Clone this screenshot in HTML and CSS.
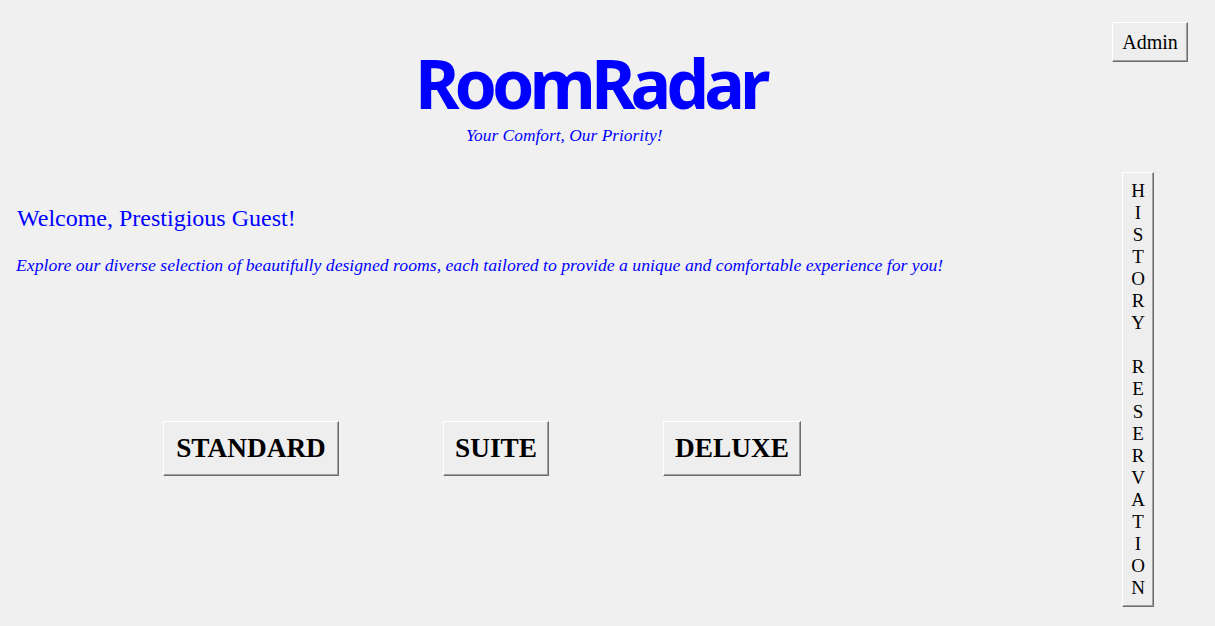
FILE: index.html
```html
<!DOCTYPE html>
<html>
<head>
<meta charset="utf-8">
<link rel="stylesheet" href="styles.css">
</head>
<body>
<div class="page">
  <main class="main">
    <header class="header">
      <h1 class="title">RoomRadar</h1>
      <p class="tagline">Your Comfort, Our Priority!</p>
    </header>
    <h2 class="welcome">Welcome, Prestigious Guest!</h2>
    <p class="explore">Explore our diverse selection of beautifully designed rooms, each tailored to provide a unique and comfortable experience for you!</p>
    <div class="rooms">
      <button class="btn room room-standard">STANDARD</button>
      <button class="btn room room-suite">SUITE</button>
      <button class="btn room room-deluxe">DELUXE</button>
    </div>
  </main>
  <aside class="side">
    <button class="btn admin">Admin</button>
    <button class="btn history"><span>H</span><span>I</span><span>S</span><span>T</span><span>O</span><span>R</span><span>Y</span><span>&nbsp;</span><span>R</span><span>E</span><span>S</span><span>E</span><span>R</span><span>V</span><span>A</span><span>T</span><span>I</span><span>O</span><span>N</span></button>
  </aside>
</div>
</body>
</html>
```
FILE: styles.css
```css
html, body {
  margin: 0;
  padding: 0;
  background: #f0f0f0;
  height: 100%;
}
body {
  font-family: "Liberation Serif", "Times New Roman", serif;
  overflow: hidden;
}
.page {
  display: grid;
  grid-template-columns: 1fr auto;
  height: 626px;
}
.main {
  padding-left: 17px;
}
.header {
  padding-left: 398px;
  padding-top: 46px;
}
.title {
  margin: 0;
  font-family: "Comic Sans MS", "Noto Sans", sans-serif;
  font-weight: 700;
  font-size: 68px;
  line-height: 74px;
  color: #0000ff;
  letter-spacing: -5px;
}
.tagline {
  margin: 6px 0 0 51px;
  font-style: italic;
  font-size: 17.4px;
  line-height: 18px;
  color: #0000ff;
}
.welcome {
  margin: 60px 0 0 0;
  font-weight: 400;
  font-size: 24px;
  line-height: 28px;
  color: #0000ff;
}
.explore {
  margin: 23px 0 0 -1px;
  font-style: italic;
  font-size: 17.7px;
  line-height: 20px;
  color: #0000ff;
}
.btn {
  font-family: "Liberation Serif", "Times New Roman", serif;
  background: #eeeeee;
  color: #000;
  border: 1px solid;
  border-color: #ffffff #6d6d6d #6d6d6d #ffffff;
  box-shadow: inset -1px -1px 0 #a0a0a0;
  padding: 0;
  cursor: pointer;
}
.rooms {
  display: flex;
  margin-top: 146px;
  padding-left: 146px;
}
.room {
  font-size: 27.3px;
  font-weight: 700;
  height: 55px;
}
.room-standard { width: 176px; }
.room-suite { width: 106px; margin-left: 104px; }
.room-deluxe { width: 138px; margin-left: 114px; }
.side {
  display: flex;
  flex-direction: column;
  align-items: flex-end;
  padding-right: 27px;
}
.admin {
  margin-top: 22px;
  width: 76px;
  height: 40px;
  font-size: 20px;
}
.history {
  margin-top: 110px;
  margin-right: 34px;
  width: 32px;
  height: 435px;
  display: flex;
  flex-direction: column;
  align-items: center;
  justify-content: center;
  font-size: 19px;
  line-height: 22.05px;
}
.history span {
  display: block;
}
```
